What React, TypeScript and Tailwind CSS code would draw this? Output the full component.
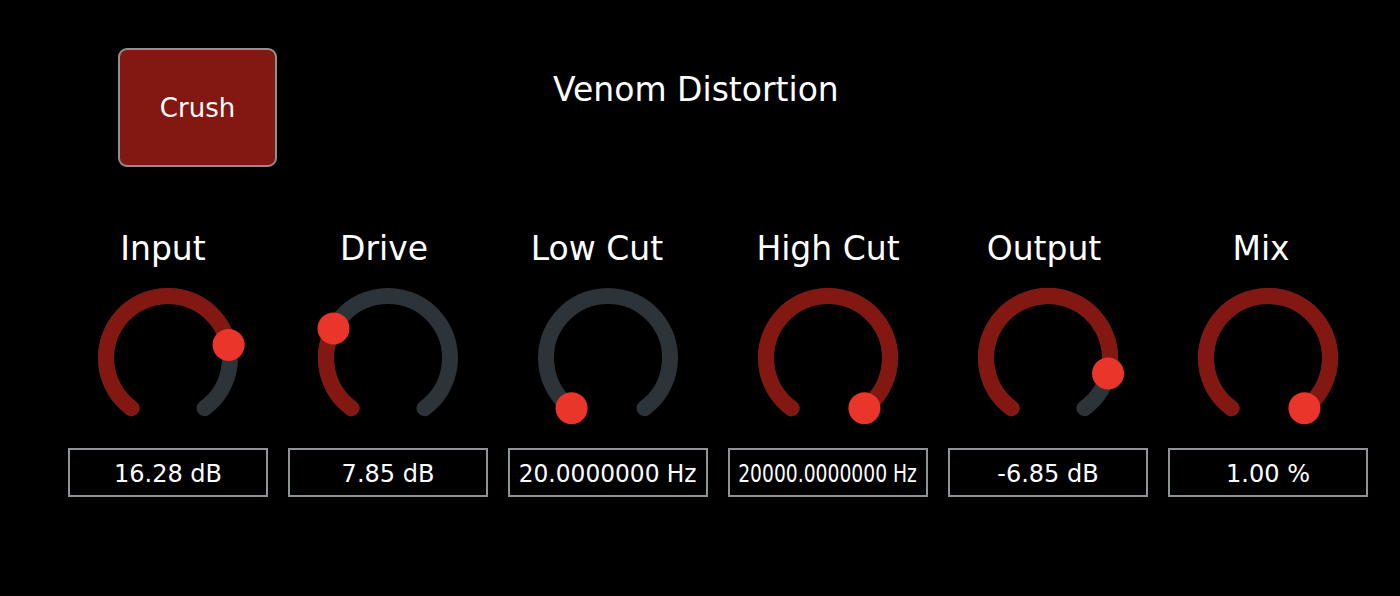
import React from "react";

const RED = "#821811";
const GRAY = "#2c3439";
const THUMB = "#e9352a";

function polar(cx: number, cy: number, r: number, deg: number) {
  const a = (deg * Math.PI) / 180;
  return { x: cx + r * Math.sin(a), y: cy - r * Math.cos(a) };
}

function arcPath(cx: number, cy: number, r: number, a0: number, a1: number) {
  const p0 = polar(cx, cy, r, a0);
  const p1 = polar(cx, cy, r, a1);
  const large = a1 - a0 > 180 ? 1 : 0;
  return `M ${p0.x} ${p0.y} A ${r} ${r} 0 ${large} 1 ${p1.x} ${p1.y}`;
}

function Knob({ angle }: { angle: number }) {
  const cx = 80;
  const cy = 80;
  const r = 62;
  const start = -144;
  const end = 144;
  const t = polar(cx, cy, r, angle);
  return (
    <svg width="160" height="160" viewBox="0 0 160 160">
      <path d={arcPath(cx, cy, r, start, end)} stroke={GRAY} strokeWidth={16} fill="none" strokeLinecap="round" />
      {angle > start + 0.5 && (
        <path d={arcPath(cx, cy, r, start, angle)} stroke={RED} strokeWidth={16} fill="none" strokeLinecap="round" />
      )}
      <circle cx={t.x} cy={t.y} r={16} fill={THUMB} />
    </svg>
  );
}

const knobs = [
  { label: "Input", angle: 77.8, value: "16.28 dB", squeeze: "", shift: "-translate-x-[5px]" },
  { label: "Drive", angle: -61.5, value: "7.85 dB", squeeze: "", shift: "-translate-x-[4px]" },
  { label: "Low Cut", angle: -144, value: "20.0000000 Hz", squeeze: "scale-x-[0.97]", shift: "-translate-x-[11px]" },
  { label: "High Cut", angle: 144, value: "20000.0000000 Hz", squeeze: "scale-x-[0.78]", shift: "translate-x-0" },
  { label: "Output", angle: 104.4, value: "-6.85 dB", squeeze: "", shift: "-translate-x-[4px]" },
  { label: "Mix", angle: 144, value: "1.00 %", squeeze: "", shift: "-translate-x-[7px]" },
];

export default function App() {
  return (
    <div
      className="w-[1400px] h-[596px] bg-black text-white overflow-hidden"
      style={{ fontFamily: '"DejaVu Sans", "Liberation Sans", sans-serif' }}
    >
      <div className="flex h-[196px]">
        <div className="pl-[118px] pt-[48px]">
          <button className="w-[159px] h-[119px] rounded-[9px] border-2 border-[#8f8f8f] bg-[#821811] text-white text-[26px] flex items-center justify-center pt-[2px]">
            Crush
          </button>
        </div>
        <div className="flex-1 pt-[70px] pl-[276px]">
          <div className="text-[33px] leading-[40px]">Venom Distortion</div>
        </div>
      </div>
      <div className="flex pl-[58px] pt-[30px]">
        {knobs.map((k) => (
          <div key={k.label} className="w-[220px] flex flex-col items-center">
            <div className={`text-[33px] leading-[40px] h-[40px] pt-[3px] ${k.shift}`}>{k.label}</div>
            <div className="mt-[12px]">
              <Knob angle={k.angle} />
            </div>
            <div className="mt-[10px] w-[200px] h-[49px] border-2 border-[#8d9497] flex items-center justify-center overflow-hidden pt-[2px]">
              <span className={`inline-block whitespace-nowrap text-[24px] leading-[30px] ${k.squeeze}`}>
                {k.value}
              </span>
            </div>
          </div>
        ))}
      </div>
    </div>
  );
}
